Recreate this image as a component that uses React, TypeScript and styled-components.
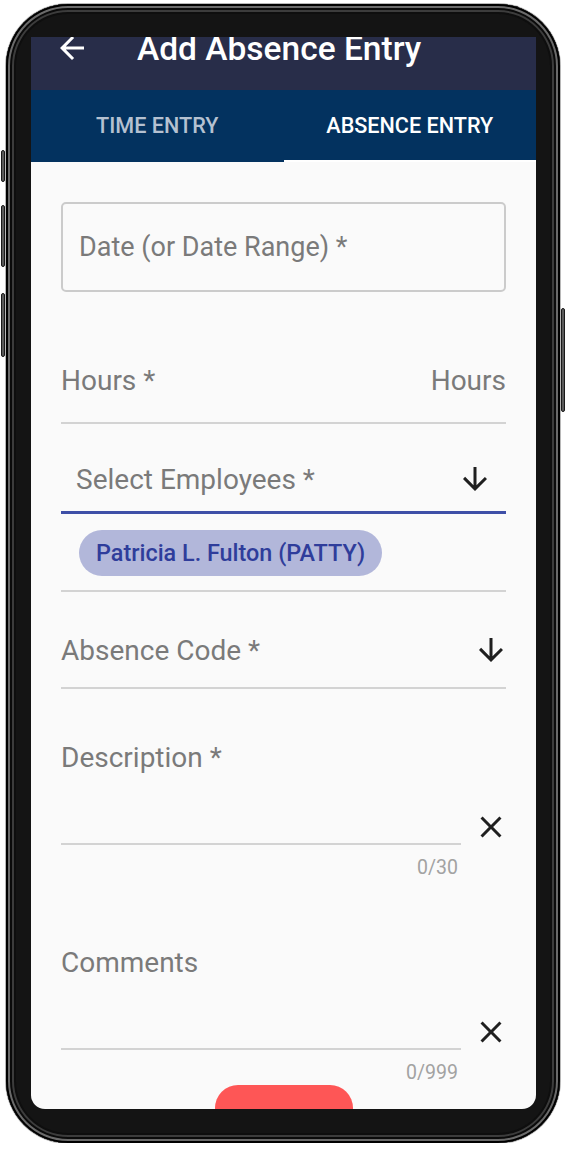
import styled, { createGlobalStyle } from 'styled-components';

const GlobalStyle = createGlobalStyle`
  html,
  body {
    margin: 0;
    padding: 0;
    background: #ffffff;
  }
  body {
    font-family: Roboto, 'Noto Sans', 'Liberation Sans', sans-serif;
  }
`;

function ArrowBack() {
  return (
    <Icon viewBox="0 0 24 24">
      <path d="M20 11H7.83l5.59-5.59L12 4l-8 8 8 8 1.41-1.41L7.83 13H20v-2z" />
    </Icon>
  );
}

function ArrowDown() {
  return (
    <Icon viewBox="0 0 24 24">
      <path d="M20 12l-1.41-1.41L13 16.17V4h-2v12.17l-5.58-5.59L4 12l8 8 8-8z" />
    </Icon>
  );
}

function Close() {
  return (
    <Icon viewBox="0 0 24 24">
      <path d="M19 6.41L17.59 5 12 10.59 6.41 5 5 6.41 10.59 12 5 17.59 6.41 19 12 13.41 17.59 19 19 17.59 13.41 12z" />
    </Icon>
  );
}

export default function App() {
  return (
    <Page>
      <GlobalStyle />
      <PhoneBody>
        <SideButton $side="left" $top={146} $height={32} />
        <SideButton $side="left" $top={201} $height={62} />
        <SideButton $side="left" $top={289} $height={64} />
        <SideButton $side="right" $top={304} $height={104} />

        <Screen>
          <Header>
            <BackButton>
              <ArrowBack />
            </BackButton>
            <Title>Add Absence Entry</Title>
          </Header>

          <Tabs>
            <Tab>Time Entry</Tab>
            <Tab $active>Absence Entry</Tab>
          </Tabs>

          <Form>
            <OutlinedField>Date (or Date Range) *</OutlinedField>

            <LineField $top={58} $bottom={12}>
              <FieldRow>
                <span>Hours *</span>
                <span>Hours</span>
              </FieldRow>
            </LineField>

            <LineField $top={25} $bottom={2} $accent>
              <FieldRow $inset>
                <span>Select Employees *</span>
                <IconButton>
                  <ArrowDown />
                </IconButton>
              </FieldRow>
            </LineField>

            <ChipArea>
              <Chip>Patricia L. Fulton (PATTY)</Chip>
            </ChipArea>

            <LineField $top={28} $bottom={7}>
              <FieldRow>
                <span>Absence Code *</span>
                <IconButton $shift={3}>
                  <ArrowDown />
                </IconButton>
              </FieldRow>
            </LineField>

            <TextField $top={51}>
              <FieldLabel>Description *</FieldLabel>
              <InputRow>
                <InputLine />
                <IconButton $shift={3}>
                  <Close />
                </IconButton>
              </InputRow>
              <Counter>0/30</Counter>
            </TextField>

            <TextField $top={65}>
              <FieldLabel>Comments</FieldLabel>
              <InputRow>
                <InputLine />
                <IconButton $shift={3}>
                  <Close />
                </IconButton>
              </InputRow>
              <Counter>0/999</Counter>
            </TextField>

            <SubmitButton />
          </Form>
        </Screen>
      </PhoneBody>
    </Page>
  );
}

/* STYLES */
const Page = styled.div`
  padding: 4px 12px 0 6px;
`;

const PhoneBody = styled.div`
  position: relative;
  box-sizing: border-box;
  width: 554px;
  height: 1139px;
  padding: 33px 24px 0 25px;
  border-radius: 62px;
  background: #141414;
  box-shadow:
    0 0 0 1px #b8b8b8,
    inset 0 0 0 2px #000000,
    inset 0 0 0 4px #6a6a6a,
    inset 0 0 0 6px #0a0a0a,
    inset 0 0 0 8px #3c3c3c,
    inset 0 0 0 10px #0e0e0e;
`;

const SideButton = styled.span<{ $side: 'left' | 'right'; $top: number; $height: number }>`
  position: absolute;
  top: ${({ $top }) => $top}px;
  ${({ $side }) => ($side === 'left' ? 'left: -5px;' : 'right: -5px;')}
  width: 4px;
  height: ${({ $height }) => $height}px;
  box-sizing: border-box;
  background: #5a5a5a;
  border: 1px solid #1a1a1a;
  border-radius: 2px;
`;

const Screen = styled.div`
  display: flex;
  flex-direction: column;
  width: 505px;
  height: 1072px;
  overflow: hidden;
  background: #fafafa;
  border-radius: 0 0 14px 14px;
`;

const Header = styled.header`
  display: flex;
  align-items: flex-start;
  gap: 47px;
  flex-shrink: 0;
  height: 53px;
  padding-left: 23px;
  background: #282d49;
`;

const BackButton = styled.div`
  width: 36px;
  height: 36px;
  margin-top: -7px;
  color: #ffffff;
`;

const Icon = styled.svg`
  display: block;
  width: 100%;
  height: 100%;
  fill: currentColor;
`;

const Title = styled.h1`
  margin: 0;
  color: #ffffff;
  font-size: 33.5px;
  font-weight: 500;
  line-height: 23px;
  white-space: nowrap;
`;

const Tabs = styled.nav`
  display: flex;
  flex-shrink: 0;
  height: 72px;
  background: #03325f;
`;

const Tab = styled.div<{ $active?: boolean }>`
  display: flex;
  flex: 1;
  align-items: center;
  justify-content: center;
  padding-bottom: 2px;
  color: ${({ $active }) => ($active ? '#ffffff' : '#b5c1d1')};
  font-size: 21.6px;
  font-weight: 500;
  text-transform: uppercase;
  box-shadow: ${({ $active }) => ($active ? 'inset 0 -2px 0 #ffffff' : 'none')};
`;

const Form = styled.div`
  display: flex;
  flex-direction: column;
  padding: 40px 30px 0;
`;

const OutlinedField = styled.div`
  display: flex;
  align-items: center;
  height: 90px;
  box-sizing: border-box;
  padding-left: 16px;
  border: 2px solid #cbcbcb;
  border-radius: 5px;
  color: #7a7a7a;
  font-size: 27px;
`;

const LineField = styled.div<{ $top: number; $bottom: number; $accent?: boolean }>`
  margin-top: ${({ $top }) => $top}px;
  padding-bottom: ${({ $bottom }) => $bottom}px;
  border-bottom: ${({ $accent }) => ($accent ? '3px solid #3e4fa7' : '2px solid #d3d3d3')};
`;

const FieldRow = styled.div<{ $inset?: boolean }>`
  display: flex;
  align-items: center;
  justify-content: space-between;
  height: 60px;
  padding: ${({ $inset }) => ($inset ? '0 13px 0 15px' : '0')};
  color: #7a7a7a;
  font-size: 28px;
`;

const IconButton = styled.div<{ $shift?: number }>`
  flex-shrink: 0;
  width: 36px;
  height: 36px;
  margin-right: ${({ $shift }) => -($shift ?? 0)}px;
  color: #1f1f1f;
`;

const ChipArea = styled.div`
  display: flex;
  padding: 16px 0 14px 18px;
  border-bottom: 2px solid #d3d3d3;
`;

const Chip = styled.span`
  display: inline-flex;
  align-items: center;
  height: 46px;
  padding: 0 17px;
  border-radius: 23px;
  background: #b2b7da;
  color: #2f3d9b;
  font-size: 23.4px;
  font-weight: 500;
`;

const TextField = styled.div<{ $top: number }>`
  display: flex;
  flex-direction: column;
  margin-top: ${({ $top }) => $top}px;
`;

const FieldLabel = styled.label`
  color: #7a7a7a;
  font-size: 28px;
  line-height: 36px;
`;

const InputRow = styled.div`
  display: flex;
  align-items: flex-end;
  gap: 12px;
`;

const InputLine = styled.div`
  flex: 1;
  height: 67px;
  border-bottom: 2px solid #d3d3d3;
`;

const Counter = styled.span`
  margin-top: 11px;
  padding-right: 48px;
  color: #a2a2a2;
  font-size: 19.5px;
  line-height: 24px;
  text-align: right;
`;

const SubmitButton = styled.button`
  align-self: center;
  flex-shrink: 0;
  width: 138px;
  height: 46px;
  margin-top: 0;
  border: none;
  border-radius: 23px;
  background: #fe5656;
`;
